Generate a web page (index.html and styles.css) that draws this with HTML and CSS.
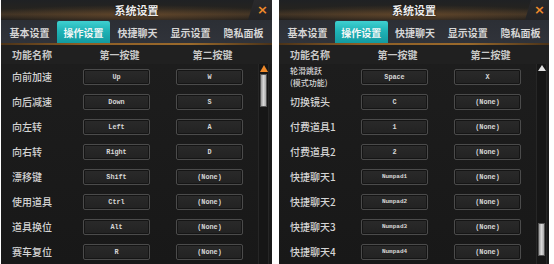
FILE: index.html
```html
<!DOCTYPE html>
<html>
<head>
<meta charset="utf-8">
<link rel="stylesheet" href="styles.css">
</head>
<body>
<div class="panel">
  <div class="titlebar"><span class="title">系统设置</span><span class="notch"></span><span class="close">×</span></div>
  <div class="tabs">
    <div class="tab">基本设置</div>
    <div class="tab active">操作设置</div>
    <div class="tab">快捷聊天</div>
    <div class="tab">显示设置</div>
    <div class="tab">隐私面板</div>
  </div>
  <div class="rule"></div>
  <div class="head"><span class="hlabel">功能名称</span><span class="hcol">第一按键</span><span></span><span class="hcol">第二按键</span></div>
  <div class="body">
    <div class="list">
      <div class="row"><span class="label">向前加速</span><span class="key">Up</span><span></span><span class="key">W</span></div>
      <div class="row"><span class="label">向后减速</span><span class="key">Down</span><span></span><span class="key">S</span></div>
      <div class="row"><span class="label">向左转</span><span class="key">Left</span><span></span><span class="key">A</span></div>
      <div class="row"><span class="label">向右转</span><span class="key">Right</span><span></span><span class="key">D</span></div>
      <div class="row"><span class="label">漂移键</span><span class="key">Shift</span><span></span><span class="key">(None)</span></div>
      <div class="row"><span class="label">使用道具</span><span class="key">Ctrl</span><span></span><span class="key">(None)</span></div>
      <div class="row"><span class="label">道具换位</span><span class="key">Alt</span><span></span><span class="key">(None)</span></div>
      <div class="row"><span class="label">赛车复位</span><span class="key">R</span><span></span><span class="key">(None)</span></div>
    </div>
    <div class="scroll">
      <span class="arrow orange"></span>
      <span class="thumb top"></span>
    </div>
  </div>
</div>
<div class="panel">
  <div class="titlebar"><span class="title">系统设置</span><span class="notch"></span><span class="close">×</span></div>
  <div class="tabs">
    <div class="tab">基本设置</div>
    <div class="tab active">操作设置</div>
    <div class="tab">快捷聊天</div>
    <div class="tab">显示设置</div>
    <div class="tab">隐私面板</div>
  </div>
  <div class="rule"></div>
  <div class="head"><span class="hlabel">功能名称</span><span class="hcol">第一按键</span><span></span><span class="hcol">第二按键</span></div>
  <div class="body">
    <div class="list">
      <div class="row"><span class="label two"><span class="line">轮滑跳跃</span><span class="line">(模式功能)</span></span><span class="key">Space</span><span></span><span class="key">X</span></div>
      <div class="row"><span class="label">切换镜头</span><span class="key">C</span><span></span><span class="key">(None)</span></div>
      <div class="row"><span class="label">付费道具1</span><span class="key">1</span><span></span><span class="key">(None)</span></div>
      <div class="row"><span class="label">付费道具2</span><span class="key">2</span><span></span><span class="key">(None)</span></div>
      <div class="row"><span class="label">快捷聊天1</span><span class="key small">Numpad1</span><span></span><span class="key">(None)</span></div>
      <div class="row"><span class="label">快捷聊天2</span><span class="key small">Numpad2</span><span></span><span class="key">(None)</span></div>
      <div class="row"><span class="label">快捷聊天3</span><span class="key small">Numpad3</span><span></span><span class="key">(None)</span></div>
      <div class="row"><span class="label">快捷聊天4</span><span class="key small">Numpad4</span><span></span><span class="key">(None)</span></div>
    </div>
    <div class="scroll">
      <span class="arrow white"></span>
      <span class="thumb bottom"></span>
    </div>
  </div>
</div>
</body>
</html>
```

FILE: styles.css
```css
html, body {
  margin: 0;
  padding: 0;
  background: #ffffff;
}
body {
  display: flex;
  gap: 7px;
  padding-left: 1px;
  height: 264px;
  overflow: hidden;
  font-family: "Noto Sans CJK SC", "Noto Sans", sans-serif;
}
.panel {
  width: 271px;
  height: 264px;
  background: #1c1c1c;
  display: flex;
  flex-direction: column;
  overflow: hidden;
}
.panel + .panel {
  width: 270px;
}
.titlebar {
  position: relative;
  height: 20px;
  flex: none;
  background:
    radial-gradient(ellipse 60% 50% at 50% 75%, rgba(140, 95, 50, 0.45), rgba(0, 0, 0, 0) 100%),
    linear-gradient(180deg, #1f2124 0%, #25231f 45%, #3b3024 72%, #1d1c1b 100%);
  display: flex;
  justify-content: center;
  align-items: center;
}
.title {
  font-size: 11px;
  font-weight: 700;
  color: #ececec;
  line-height: 20px;
  text-shadow: 0 0 2px #000;
}
.notch {
  position: absolute;
  right: 0;
  top: 0;
  width: 24px;
  height: 20px;
  background: linear-gradient(180deg, #2a2a2c, #232325);
  clip-path: polygon(6px 0, 100% 0, 100% 100%, 0 100%);
}
.close {
  position: absolute;
  right: 4px;
  top: 2px;
  font-family: "DejaVu Sans", sans-serif;
  font-size: 13px;
  font-weight: 700;
  line-height: 16px;
  color: #f08a2a;
}
.tabs {
  height: 23px;
  flex: none;
  display: flex;
  padding: 1px 2px 0 2px;
  box-sizing: border-box;
  background: linear-gradient(180deg, #2c2f35, #30333a);
}
.tab {
  flex: 1;
  display: flex;
  align-items: center;
  justify-content: center;
  font-size: 10px;
  font-weight: 700;
  color: #d6d6d6;
}
.tab.active {
  margin: 0 1px;
  background: linear-gradient(180deg, #3fd0d0 0%, #1fb3b6 45%, #139aa0 100%);
  border-radius: 2px 2px 0 0;
  color: #f2f6f6;
}
.rule {
  height: 2px;
  flex: none;
  background: linear-gradient(90deg, #4a3218, #8e5e26 30%, #9a6a2c 70%, #4a3218);
}
.head, .row {
  display: grid;
  grid-template-columns: 82px 67px 26px 67px;
  align-items: center;
}
.head {
  height: 19px;
  flex: none;
  background: #202020;
  font-size: 10px;
  font-weight: 700;
  color: #c8c8c8;
}
.hlabel {
  padding-left: 11px;
}
.hcol {
  text-align: center;
  padding-left: 6px;
}
.body {
  flex: 1;
  display: flex;
  background: linear-gradient(180deg, #1d1d1d, #181818);
}
.list {
  width: 257px;
  display: flex;
  flex-direction: column;
}
.row {
  height: 25px;
  flex: none;
}
.label {
  padding-left: 11px;
  font-size: 10px;
  font-weight: 500;
  color: #d4d4d4;
  line-height: 12px;
}
.label.two {
  display: flex;
  flex-direction: column;
}
.line {
  display: block;
  height: 12px;
  font-size: 8px;
  line-height: 12px;
}
.key {
  height: 16px;
  box-sizing: border-box;
  border: 1px solid #4b4b4b;
  border-radius: 2px;
  background: linear-gradient(180deg, #2a2a2a, #222222);
  box-shadow: inset 0 0 0 1px #151515;
  display: flex;
  align-items: center;
  justify-content: center;
  font-family: "Liberation Mono", monospace;
  font-size: 6.8px;
  font-weight: 700;
  color: #d8d8d8;
}
.key.small {
  font-size: 6px;
}
.scroll {
  width: 11px;
  position: relative;
  background: #161616;
  border-left: 1px solid #262626;
  border-right: 1px solid #262626;
  box-sizing: border-box;
}
.arrow {
  position: absolute;
  left: 1px;
  top: 1px;
  width: 0;
  height: 0;
  border-left: 4px solid transparent;
  border-right: 4px solid transparent;
}
.arrow.orange {
  border-bottom: 7px solid #f08a2a;
}
.arrow.white {
  top: 1px;
  border-bottom: 6px solid #e0e0e0;
}
.thumb {
  position: absolute;
  left: 1px;
  width: 7px;
  background: linear-gradient(90deg, #9a9a9a, #d8d8d8 50%, #a8a8a8);
  border: 1px solid #555;
  box-sizing: border-box;
}
.thumb.top {
  top: 10px;
  height: 33px;
}
.thumb.bottom {
  top: 159px;
  height: 33px;
}
```
